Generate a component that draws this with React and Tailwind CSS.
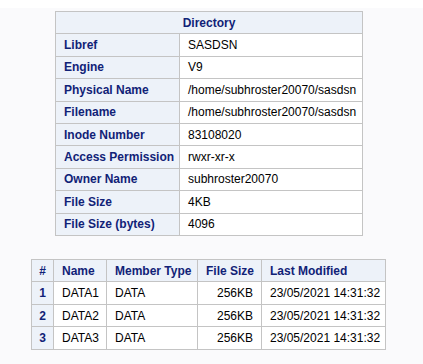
export default function App() {
  const dir = [
    ["Libref", "SASDSN"],
    ["Engine", "V9"],
    ["Physical Name", "/home/subhroster20070/sasdsn"],
    ["Filename", "/home/subhroster20070/sasdsn"],
    ["Inode Number", "83108020"],
    ["Access Permission", "rwxr-xr-x"],
    ["Owner Name", "subhroster20070"],
    ["File Size", "4KB"],
    ["File Size (bytes)", "4096"],
  ];
  const members = [
    ["1", "DATA1", "DATA", "256KB", "23/05/2021 14:31:32"],
    ["2", "DATA2", "DATA", "256KB", "23/05/2021 14:31:32"],
    ["3", "DATA3", "DATA", "256KB", "23/05/2021 14:31:32"],
  ];
  const font = { fontFamily: '"Liberation Sans", Arial, sans-serif' };
  return (
    <div
      className="w-[423px] h-[364px] bg-[#fafafc] border-t-[8px] border-white text-[12px] text-black overflow-hidden"
      style={font}
    >
      <div className="flex flex-col items-start">
        <table className="ml-[55px] mt-[3px] w-[307px] table-fixed border-collapse border border-[#c4c4c4]">
          <colgroup>
            <col className="w-[124px]" />
            <col className="w-[183px]" />
          </colgroup>
          <thead>
            <tr className="h-[22.4px]">
              <th
                colSpan={2}
                className="bg-[#edf2f9] text-[#112277] font-bold text-center border border-[#c4c4c4] p-0"
              >
                Directory
              </th>
            </tr>
          </thead>
          <tbody>
            {dir.map(([k, v]) => (
              <tr key={k} className="h-[22.4px]">
                <th className="bg-[#edf2f9] text-[#112277] font-bold text-left px-2 py-0 border border-[#c4c4c4] whitespace-nowrap">
                  {k}
                </th>
                <td className="bg-white px-2 py-0 border border-[#c4c4c4] whitespace-nowrap">
                  {v}
                </td>
              </tr>
            ))}
          </tbody>
        </table>

        <table className="ml-[31px] mt-[23px] w-[354px] table-fixed border-collapse border border-[#c4c4c4]">
          <colgroup>
            <col className="w-[22px]" />
            <col className="w-[53px]" />
            <col className="w-[91px]" />
            <col className="w-[64px]" />
            <col className="w-[124px]" />
          </colgroup>
          <thead>
            <tr className="h-[22.5px] bg-[#edf2f9] text-[#112277] font-bold">
              <th className="text-center px-0 py-0 border border-[#c4c4c4]">#</th>
              <th className="text-left px-2 py-0 border border-[#c4c4c4] whitespace-nowrap">Name</th>
              <th className="text-left px-2 py-0 border border-[#c4c4c4] whitespace-nowrap">Member Type</th>
              <th className="text-right px-2 py-0 border border-[#c4c4c4] whitespace-nowrap">File Size</th>
              <th className="text-left px-2 py-0 border border-[#c4c4c4] whitespace-nowrap">Last Modified</th>
            </tr>
          </thead>
          <tbody>
            {members.map((r) => (
              <tr key={r[0]} className="h-[22.5px]">
                <th className="bg-[#edf2f9] text-[#112277] font-bold text-center p-0 border border-[#c4c4c4]">
                  {r[0]}
                </th>
                <td className="bg-white px-2 py-0 border border-[#c4c4c4] whitespace-nowrap">{r[1]}</td>
                <td className="bg-white px-2 py-0 border border-[#c4c4c4] whitespace-nowrap">{r[2]}</td>
                <td className="bg-white px-2 py-0 border border-[#c4c4c4] text-right whitespace-nowrap">{r[3]}</td>
                <td className="bg-white px-2 py-0 border border-[#c4c4c4] whitespace-nowrap">{r[4]}</td>
              </tr>
            ))}
          </tbody>
        </table>
      </div>
    </div>
  );
}
